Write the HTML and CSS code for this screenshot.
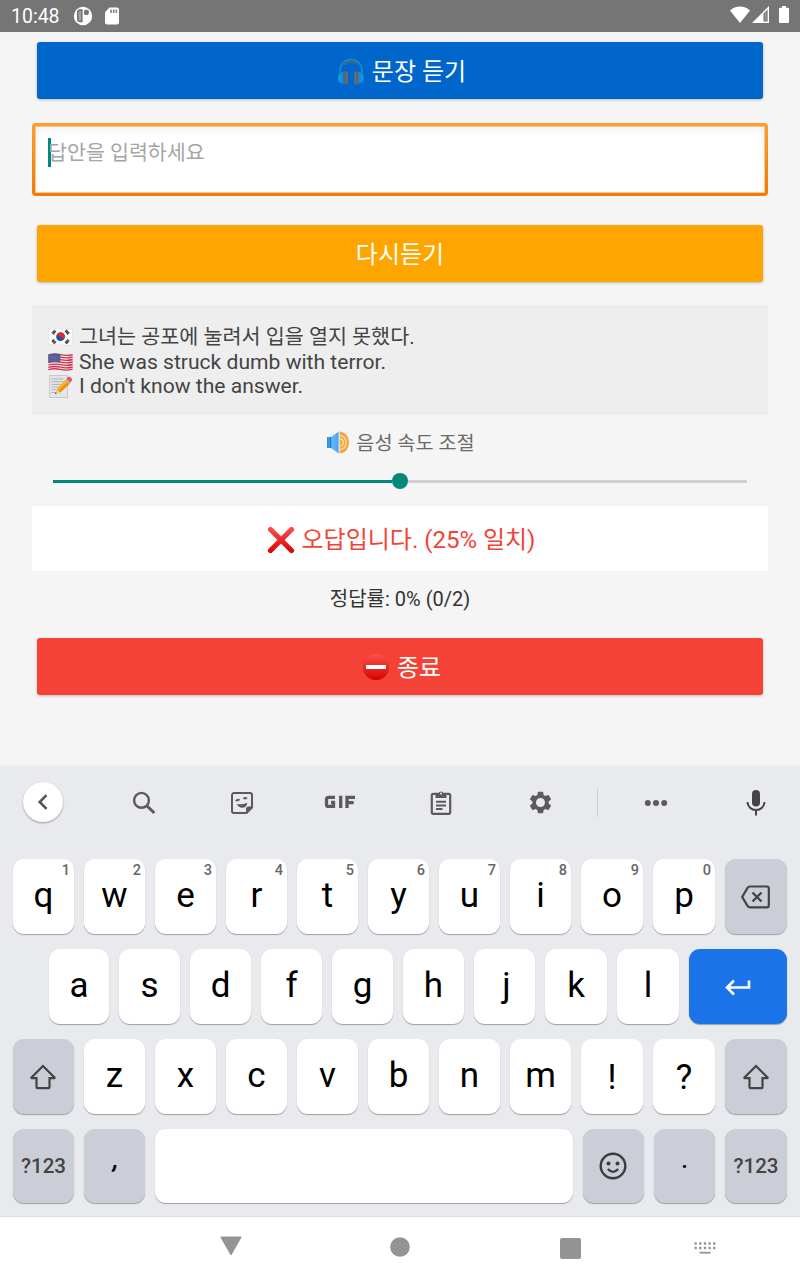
FILE: index.html
```html
<!DOCTYPE html>
<html lang="ko">
<head>
<meta charset="utf-8">
<title>문장 듣기</title>
<link rel="stylesheet" href="styles.css">
</head>
<body>
<header class="status">
  <span class="clock">10:48</span>
  <svg class="st-app" width="20" height="20" viewBox="0 0 20 20"><circle cx="10" cy="10" r="9.2" fill="#fff"/><path d="M8.900 4v11.500H7A2.300 2.300 0 0 1 4.700 13.200V6.300A2.300 2.300 0 0 1 7 4z" fill="#a0a0a0" stroke="#6a6a6a" stroke-width="1.300"/><rect x="11" y="3.700" width="4.800" height="5.200" rx="1.600" fill="#757575"/></svg>
  <svg class="st-sd" width="16" height="18" viewBox="0 0 16 18"><path d="M5.500.5H13a2 2 0 0 1 2 2v13a2 2 0 0 1-2 2H3a2 2 0 0 1-2-2V5.300z" fill="#fff"/><path d="M6.200 2.500h1.700v3.500H6.200zM8.900 2.500h1.700v3.500H8.900zM11.500 2.500h1.600v3.500h-1.600z" fill="#888"/></svg>
  <span class="spacer"></span>
  <svg class="st-wifi" width="20" height="17" viewBox="0 0 20 17"><path d="M0 4.500C5.500-1 14.500-1 20 4.500L10 17z" fill="#fff"/></svg>
  <svg class="st-cell" width="18" height="18" viewBox="0 0 18 18"><path d="M17 0v17H0z" fill="#fff"/><path d="M15.600 3.600v12H11.500V7.700z" fill="#757575"/><path d="M12.800 6.500h1.600v9h-1.600z" fill="#999"/></svg>
  <svg class="st-bat" width="10" height="17" viewBox="0 0 10 17"><path d="M3 0h4v1.700h2a1 1 0 0 1 1 1V16a1 1 0 0 1-1 1H1a1 1 0 0 1-1-1V2.700a1 1 0 0 1 1-1h2z" fill="#fff"/></svg>
</header>

<main class="page">
  <button class="btn blue with-icon">
    <svg class="emoji-lg" viewBox="0 0 28 28"><defs><linearGradient id="pad" x1="0" x2="1"><stop offset="0" stop-color="#12a5f2"/><stop offset="1" stop-color="#1479d2"/></linearGradient></defs><path d="M3 16V13a11 10.500 0 0 1 22 0v3" fill="none" stroke="#1686c9" stroke-width="1.800"/><path d="M6.500 7.500C10 2.600 18 2.600 21.500 7.500l-1.600.8C16.500 5 11.500 5 8.100 8.300z" fill="#526670"/><path d="M8 15H5.500Q1 16 1 21t5 5.500h2z" fill="url(#pad)"/><path d="M20 15h2.500Q27 16 27 21t-5 5.500h-2z" fill="#168ee2"/><rect x="6.500" y="14" width="4" height="13.500" rx="1.500" fill="#59656d"/><rect x="17.500" y="14" width="4" height="13.500" rx="1.500" fill="#59656d"/><path d="M10 15v12M18 15v12" stroke="#87786e" stroke-width=".8"/></svg><span>문장 듣기</span>
  </button>

  <div class="field"><span class="caret"></span><span class="hint">답안을 입력하세요</span></div>

  <button class="btn orange"><span>다시듣기</span></button>

  <section class="sentences">
    <p><svg class="flag" viewBox="0 0 25 18"><path d="M.5 1Q6-.2 12.500.8T24.500.7v16.200Q18 18 12.500 17T.5 17z" fill="#fafafa" stroke="#ddd" stroke-width=".6"/><circle cx="12.500" cy="8.800" r="4.300" fill="#1550a5"/><path d="M8.500 7.200a4.300 4.300 0 0 1 8.200 2.700c-1 1.100-2.700.8-4.100-.9-1.500-1.700-3.700-1.500-4.100-1.800z" fill="#dc2838"/><path d="M4.500 5.800l2.800-3.200M17.700 2.500l3 3.400M4.500 12l2.800 3.300M17.700 15.300l3-3.500" stroke="#333" stroke-width="3" stroke-dasharray="1.200 .3"/></svg><span class="ko">그녀는 공포에 눌려서 입을 열지 못했다.</span></p>
    <p><svg class="flag" viewBox="0 0 25 18"><path d="M.3 1.500Q6-.5 12.500 1T24.700.8v15.700Q19 18 12.500 16.800T.3 17z" fill="#f3e9ea"/><path d="M.3 2.100Q6 .2 12.500 1.700T24.700 1.600M.3 4.700Q6 2.800 12.500 4.200T24.700 4M.3 7.200Q6 5.300 12.500 6.700T24.700 6.500M.3 9.600Q6 7.800 12.500 9.200T24.700 9M.3 12Q6 10.300 12.500 11.700T24.700 11.500M.3 14.300Q6 12.800 12.500 14.200T24.700 14M.3 16.600Q6 15 12.500 16.400T24.700 16.100" fill="none" stroke="#d0364d" stroke-width="1.300"/><path d="M.3 1.500Q6-.3 12.200.9v8.300Q6 8 .3 9.800z" fill="#4e5590"/><path d="M1.500 3.200h10M1.500 5.200h10M1.500 7.200h10" stroke="#b8bdd6" stroke-width=".7" stroke-dasharray=".8 1.200"/></svg><span>She was struck dumb with terror.</span></p>
    <p><svg class="memo" viewBox="0 0 25 23"><rect x="1.500" y=".5" width="18" height="22" fill="#e4e5e5" stroke="#c8caca"/><path d="M3.500 4h12M3.500 6.700h14M3.500 9.400h12M3.500 12h8M3.500 14.700h5M3.500 17.500h4" stroke="#aeb5b8"/><path d="M8.500 14.500L18 4.500l4 4L12 17.500z" fill="#ffb30b"/><path d="M10.300 16L20 6.500l2 2L12 17.500z" fill="#f28b13"/><path d="M8.500 14.500L7 19l5-1.500z" fill="#e8c893"/><path d="M7.500 17.300L7 19l1.800-.6z" fill="#333"/><path d="M17 5.500l1.800-2 4 4-1.800 1.800z" fill="#aebac0"/><path d="M18.500 3.800l1.500-1.900q1-.9 2.500.4l1.300 1.500q.8 1-.2 2.100l-1.400 1.700z" fill="#ed5350"/></svg><span>I don't know the answer.</span></p>
  </section>

  <div class="speed-label"><svg class="speaker" viewBox="0 0 24 23"><defs><linearGradient id="horn" x1="0" x2="1"><stop offset="0" stop-color="#2a8ed8"/><stop offset=".5" stop-color="#66b8f5"/><stop offset="1" stop-color="#4aa1ea"/></linearGradient></defs><path d="M14 .7a9 10.800 0 0 1 0 21.600z" fill="#f3a33a"/><path d="M14 4.300q6 1 6 7.200t-6 7.200M14 7.700q3.300.8 3.300 3.800t-3.300 3.800" fill="none" stroke="#ffe1ae" stroke-width="1.300"/><path d="M1 6h4L12.800.5v22L5 17H1z" fill="url(#horn)"/><path d="M4.500 6v11" stroke="#1d76bd"/><path d="M12.800.5v22" stroke="#94c7ed" stroke-width="1.200"/></svg><span>음성 속도 조절</span></div>
  <div class="slider"><span class="done"></span><span class="thumb"></span><span class="rest"></span></div>

  <div class="result"><svg class="emoji-lg" viewBox="0 0 28 28"><defs><linearGradient id="cross" gradientUnits="userSpaceOnUse" x1="0" x2="0" y1="0" y2="28"><stop offset="0" stop-color="#ff5252"/><stop offset="1" stop-color="#d50000"/></linearGradient></defs><path d="M3.500 3.500l21 21M24.500 3.500l-21 21" stroke="url(#cross)" stroke-width="5.200" stroke-linecap="round"/></svg><span>오답입니다. (25% 일치)</span></div>
  <div class="stats">정답률: 0% (0/2)</div>

  <button class="btn red with-icon"><svg class="emoji-lg" viewBox="0 0 28 28"><circle cx="14" cy="14" r="13.200" fill="url(#cross)"/><rect x="4" y="12" width="20" height="4" fill="#fff"/></svg><span>종료</span></button>
</main>

<section class="keyboard">
  <div class="tools">
    <div class="tool first"><span class="back"><svg width="12" height="18" viewBox="0 0 12 18"><path d="M9.500 2.200L2.700 9l6.800 6.800" fill="none" stroke="#555" stroke-width="2.600"/></svg></span></div>
    <div class="tool search"><svg width="26" height="26" viewBox="0 0 26 26"><circle cx="10.500" cy="10.300" r="7.400" fill="none" stroke="#5b5b5b" stroke-width="2.400"/><path d="M15.800 15.700l7.500 7.300" stroke="#5b5b5b" stroke-width="3"/></svg></div>
    <div class="tool"><svg width="24" height="24" viewBox="0 0 24 24"><path d="M4 2.100h16a2 2 0 0 1 2 2v12.500l-5.500 5.300H4a2 2 0 0 1-2-2V4.100a2 2 0 0 1 2-2z" fill="none" stroke="#5b5b5b" stroke-width="2"/><path d="M22.500 15.500h-4a2.500 2.500 0 0 0-2.500 2.500v4.500z" fill="#5b5b5b"/><path d="M6 10.200q1.500-2.200 3.500-.8M13.500 7.800q1.800-1.700 3.400 0" fill="none" stroke="#5b5b5b" stroke-width="2"/><path d="M6.800 13q5 1 10.600-1.200-.8 5-5.200 5-3.600 0-5.400-3.800z" fill="#5b5b5b"/></svg></div>
    <div class="tool gif"><svg width="32" height="14" viewBox="0 0 32 14"><path d="M11 2.400H4.500q-2 0-2 2v5q0 2 2 2h5V7.300H7M16.700.8v12.200M23 13V2.400h8M23 7.700h6.700" fill="none" stroke="#5b5b5b" stroke-width="3.300"/></svg></div>
    <div class="tool clip"><svg width="22" height="26" viewBox="0 0 22 26"><rect x="1.800" y="3.800" width="18.400" height="20" rx="1.500" fill="none" stroke="#5b5b5b" stroke-width="2.200"/><path d="M5.500 3.500h3a2.600 2.600 0 0 1 5 0h3V8h-11z" fill="#5b5b5b"/><circle cx="11" cy="3.500" r="1" fill="#e8eaed"/><path d="M6 11.700h10M6 15.400h10M6 19.100h6.500" stroke="#5b5b5b" stroke-width="2"/></svg></div>
    <div class="tool"><svg width="27" height="27" viewBox="0 0 24 24"><path fill="#5b5b5b" d="M19.140 12.940c.04-.3.060-.61.060-.94 0-.32-.02-.64-.07-.94l2.030-1.580a.49.49 0 0 0 .12-.61l-1.920-3.320a.488.488 0 0 0-.59-.22l-2.390.96c-.5-.38-1.030-.7-1.620-.94l-.36-2.540a.484.484 0 0 0-.48-.41h-3.840c-.24 0-.43.17-.47.41l-.36 2.540c-.59.24-1.130.57-1.620.94l-2.390-.96a.47.47 0 0 0-.59.22L2.740 8.870c-.12.21-.08.47.12.61l2.030 1.580c-.05.3-.09.63-.09.94s.02.64.07.94l-2.030 1.580a.49.49 0 0 0-.12.610l1.920 3.320c.12.22.37.29.59.22l2.390-.96c.5.38 1.030.7 1.620.94l.36 2.540c.05.24.24.41.48.41h3.840c.24 0 .44-.17.47-.41l.36-2.540c.59-.24 1.130-.56 1.620-.94l2.390.96c.22.080.47 0 .59-.22l1.920-3.320a.47.47 0 0 0-.12-.61zM12 16A4 4 0 1 1 12 8a4 4 0 0 1 0 8z"/></svg></div>
    <div class="tool"><span class="rule"></span></div>
    <div class="tool"><svg width="24" height="8" viewBox="0 0 24 8"><g fill="#5b5b5b"><circle cx="3.800" cy="4" r="3"/><circle cx="12" cy="4" r="3"/><circle cx="20.200" cy="4" r="3"/></g></svg></div>
    <div class="tool last"><svg width="22" height="28" viewBox="0 0 22 28"><rect x="7" y="1" width="8" height="16.500" rx="4" fill="#444"/><path d="M2.500 13a8.500 8 0 0 0 17 0M11 21v5.500" fill="none" stroke="#444" stroke-width="2"/></svg></div>
  </div>

  <div class="row r1">
    <div class="key"><sup>1</sup>q</div><div class="key"><sup>2</sup>w</div><div class="key"><sup>3</sup>e</div><div class="key"><sup>4</sup>r</div><div class="key"><sup>5</sup>t</div><div class="key"><sup>6</sup>y</div><div class="key"><sup>7</sup>u</div><div class="key"><sup>8</sup>i</div><div class="key"><sup>9</sup>o</div><div class="key"><sup>0</sup>p</div>
    <div class="key gray icon"><svg width="32" height="26" viewBox="0 0 32 26"><path d="M10 2.500h17a1.800 1.800 0 0 1 1.800 1.800v17.200a1.800 1.800 0 0 1-1.800 1.800H10a3 3 0 0 1-2.500-1.400L2.200 13l5.300-9.100A3 3 0 0 1 10 2.500z" fill="none" stroke="#444" stroke-width="2.200"/><path d="M12.500 8.500l9 9M21.500 8.500l-9 9" stroke="#444" stroke-width="2.400"/></svg></div>
  </div>
  <div class="row r2">
    <div class="key">a</div><div class="key">s</div><div class="key">d</div><div class="key">f</div><div class="key">g</div><div class="key">h</div><div class="key j">j</div><div class="key">k</div><div class="key">l</div>
    <div class="key enter icon"><svg width="28" height="18" viewBox="0 0 28 18"><path d="M25 2.500v7H3M10 2.500L3 9.500l7 7" fill="none" stroke="#fff" stroke-width="2.600"/></svg></div>
  </div>
  <div class="row r1">
    <div class="key gray icon nudge"><svg width="28" height="26" viewBox="0 0 28 26"><path d="M14 2L2.500 13.500q-.5.700.4.700H7.500v9q0 1 1 1h11q1 0 1-1v-9h4.600q.9 0 .4-.7z" fill="none" stroke="#444" stroke-width="2.200"/></svg></div>
    <div class="key">z</div><div class="key">x</div><div class="key">c</div><div class="key">v</div><div class="key">b</div><div class="key">n</div><div class="key">m</div><div class="key punct">!</div><div class="key punct">?</div>
    <div class="key gray icon"><svg width="28" height="26" viewBox="0 0 28 26"><path d="M14 2L2.500 13.500q-.5.700.4.700H7.500v9q0 1 1 1h11q1 0 1-1v-9h4.600q.9 0 .4-.7z" fill="none" stroke="#444" stroke-width="2.200"/></svg></div>
  </div>
  <div class="row r4">
    <div class="key gray sym">?123</div><div class="key gray comma">,</div><div class="key"></div>
    <div class="key gray icon nudge"><svg width="28" height="28" viewBox="0 0 28 28"><circle cx="14" cy="14" r="12.300" fill="none" stroke="#3d3d3d" stroke-width="2.400"/><circle cx="9.500" cy="11.500" r="2" fill="#3d3d3d"/><circle cx="18.500" cy="11.500" r="2" fill="#3d3d3d"/><path d="M8.800 17q5.200 5.700 10.400 0" fill="none" stroke="#3d3d3d" stroke-width="2.300"/></svg></div>
    <div class="key gray dot">.</div><div class="key gray sym">?123</div>
  </div>
</section>

<nav class="nav">
  <span></span>
  <span class="n1"><svg width="22" height="20" viewBox="0 0 22 20"><path d="M1.300 1.300h19.400L11 18.500z" fill="#949494" stroke="#949494" stroke-width="1.400" stroke-linejoin="round"/></svg></span>
  <span class="n2"><svg width="20" height="20" viewBox="0 0 20 20"><circle cx="10" cy="10" r="9.800" fill="#949494"/></svg></span>
  <span class="n3"><i class="square"></i></span>
  <span class="n4"><svg width="22" height="12" viewBox="0 0 22 12"><path d="M.5 1.500h21M.5 6h21" stroke="#949494" stroke-width="2.300" stroke-dasharray="2.300 2.350"/><path d="M5.500 10.700h11" stroke="#949494" stroke-width="1.800"/></svg></span>
</nav>
</body>
</html>
```
FILE: styles.css
```css
* { box-sizing: border-box; }
body {
  margin: 0; width: 800px; height: 1280px; overflow: hidden;
  display: flex; flex-direction: column;
  background: #f5f5f5; color: #333;
  font-family: Roboto, "Noto Sans CJK KR", sans-serif; font-size: 20px;
}
svg { display: block; flex: none; }
p { margin: 0; }

.status { height: 32px; flex: none; background: #757575; color: #fff; display: flex; align-items: center; padding: 0 11px; }
.clock { font-size: 19.500px; line-height: 30px; padding-top: 2px; width: 62px; }
.st-sd { margin-left: 11px; }
.spacer { flex: 1; }
.st-wifi { margin-bottom: 3px; }
.st-cell { margin: 0 9px 2px 2px; }
.st-bat { margin-bottom: 3px; }

.page { height: 734px; flex: none; padding: 10px 32px 0; display: flex; flex-direction: column; }
.btn {
  height: 57px; flex: none; margin: 0 5px; padding: 2px 0 0; border: 0; border-radius: 3px;
  color: #fff; font: 24px/55px Roboto, "Noto Sans CJK KR", sans-serif;
  display: flex; align-items: center; justify-content: center; gap: 7px;
  box-shadow: 0 1px 3px rgba(0,0,0,.24);
}
.btn span { padding-top: 2px; line-height: 53px; }
.with-icon { padding: 1px 0 0 3px; }
.with-icon span { padding-top: 3px; }
.blue { background: #0066cc; }
.orange { background: #ffa500; margin-top: 29px; }
.red { background: #f44336; }
.emoji-lg { width: 28px; height: 28px; }

.field {
  height: 73px; flex: none; margin-top: 24px; border: 3px solid transparent; border-radius: 4px;
  background: linear-gradient(#fff, #fff) padding-box, linear-gradient(#fb9f2e, #f17a06) border-box;
  box-shadow: inset 0 0 0 1px rgba(246,140,26,.45), inset 0 4px 8px rgba(0,0,0,.06);
  padding: 12px 13px; display: flex;
}
.caret { width: 3px; height: 29px; background: #00897b; margin-right: -3px; }
.hint { color: #a5a5a5; font-size: 20.600px; line-height: 31px; }

.sentences { height: 110px; flex: none; margin-top: 23px; background: #eee; padding: 20px 16px 0; color: #444; font-size: 21.100px; }
.sentences p { display: flex; align-items: center; gap: 6px; height: 24px; line-height: 24px; }
.sentences p:first-child { height: 25px; line-height: 25px; }
.sentences .ko { font-size: 20.700px; }
.flag { width: 25px; height: 18px; margin-bottom: 1px; }
.memo { width: 25px; height: 23px; }

.speed-label { height: 53px; flex: none; margin-bottom: 1px; padding: 0 0 1px 1px; display: flex; justify-content: center; align-items: center; gap: 6px; color: #6a6a6a; font-size: 19.700px; }
.speaker { width: 24px; height: 23px; margin-top: 3px; }
.slider { height: 24px; flex: none; margin: 0 21px; display: flex; align-items: center; }
.done, .rest { flex: 1; height: 3px; background: #00897b; }
.rest { background: #d0d0d0; }
.thumb { width: 16px; height: 16px; border-radius: 50%; background: #00897b; }
.result { height: 65px; flex: none; margin-top: 13px; padding: 0 0 2px 2px; background: #fff; color: #f44336; font-size: 24px; display: flex; align-items: center; justify-content: center; gap: 7px; }
.result .emoji-lg { margin-top: 4px; }
.stats { height: 67px; flex: none; text-align: center; line-height: 56px; }

.keyboard { height: 450px; flex: none; background: #e8eaed; box-shadow: 0 0 2px rgba(0,0,0,.06); }
.tools { height: 93px; display: grid; grid-template-columns: 93px 100px 98px 98px 102px 98px 17px 100px 94px; padding-bottom: 20px; }
.tool { display: flex; align-items: center; justify-content: center; }
.first { padding: 0 7px 1px 0; }
.search { padding-left: 2px; }
.gif { padding-bottom: 1px; }
.clip { padding-left: 1px; }
.last { padding-left: 6px; }
.back { width: 40px; height: 40px; border-radius: 50%; background: #fff; display: flex; align-items: center; justify-content: center; box-shadow: 0 1px 2px rgba(0,0,0,.35); }
.rule { width: 1px; height: 29px; background: #cbcdd1; }
.row { display: grid; grid-template-rows: 100%; gap: 10px; height: 75px; margin: 0 13px 15px; }
.r1 { grid-template-columns: repeat(8, 61px) repeat(3, 62px); }
.r2 { grid-template-columns: 60px repeat(6, 61px) 62px 62px 98px; margin-left: 49px; }
.r4 { grid-template-columns: 61px 61px 418px 61px 61px 62px; height: 74px; }
.key {
  position: relative; background: #fff; border-radius: 11px; color: #000;
  font-size: 35px; line-height: 74px; text-align: center;
  box-shadow: 0 1px 1px rgba(0,0,0,.32);
}
.key sup { position: absolute; right: 4px; top: 4px; font-size: 14.500px; line-height: 16px; font-weight: 500; color: #666; }
.gray { background: #cbced6; }
.icon { display: flex; align-items: center; justify-content: center; }
.nudge { padding-right: 2px; }
.enter { background: #1a73e8; padding-right: 1px; }
.j { padding-left: 4px; }
.punct { line-height: 77px; }
.sym { font-size: 20.500px; font-weight: 500; color: #444; line-height: 75px; }
.comma { font-size: 24px; font-weight: 700; font-style: italic; line-height: 62px; padding-left: 2px; }
.dot { font-size: 24px; font-weight: 500; line-height: 62px; }

.nav { flex: 1; background: #fff; border-top: 1px solid #dadce0; display: grid; grid-template-columns: 146px 169px 169px 173px 95px; }
.nav span { display: flex; justify-content: center; align-items: flex-start; padding-top: 21px; }
.nav .n1 { padding-top: 19px; }
.nav .n2 { padding-top: 20px; }
.nav .n4 { padding-top: 25px; }
.square { width: 21px; height: 21px; border-radius: 2px; background: #949494; }
```
